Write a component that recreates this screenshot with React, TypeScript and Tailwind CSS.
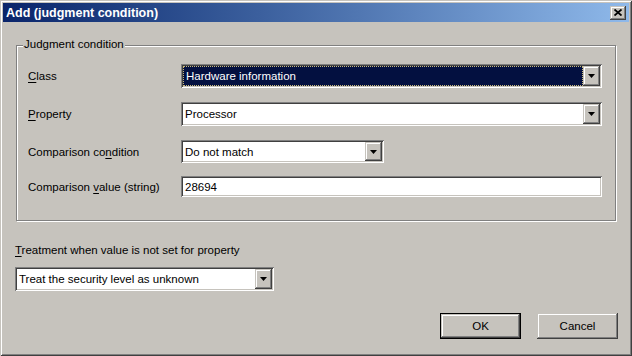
import React from 'react';

const sunken =
  'shadow-[inset_1px_1px_0_#808080,inset_-1px_-1px_0_#ffffff,inset_2px_2px_0_#404040,inset_-2px_-2px_0_#c6c3bd]';
const raised =
  'shadow-[inset_-1px_-1px_0_#404040,inset_1px_1px_0_#c6c3bd,inset_-2px_-2px_0_#808080,inset_2px_2px_0_#ffffff]';

const Arrow = () => (
  <svg width="7" height="4" viewBox="0 0 7 4">
    <path d="M0 0h7L3.5 4z" fill="#000" />
  </svg>
);

const DropButton = () => (
  <div className={`flex w-[17px] items-center justify-center bg-[#c6c3bd] ${raised}`}>
    <Arrow />
  </div>
);

interface ComboProps {
  value: string;
  width: string;
  height?: string;
  selected?: boolean;
}

const Combo = ({ value, width, height = 'h-[24px]', selected }: ComboProps) => (
  <div className={`flex ${width} ${height} bg-white p-[2px] ${sunken}`}>
    {selected ? (
      <div className="flex flex-1 items-center border border-dotted border-[#c9b97a] bg-[#031040] pl-[2px] text-white">
        {value}
      </div>
    ) : (
      <div className="flex flex-1 items-center pl-[2px]">{value}</div>
    )}
    <DropButton />
  </div>
);

const Key = ({ children }: { children: React.ReactNode }) => (
  <span className="underline underline-offset-[2px]">{children}</span>
);

const Row = ({ label, children, className }: { label: React.ReactNode; children: React.ReactNode; className: string }) => (
  <div className={`flex items-center ${className}`}>
    <div className="w-[153px]">{label}</div>
    {children}
  </div>
);

export default function App() {
  return (
    <div className="flex h-[356px] w-[632px] flex-col bg-[#c6c3bd] p-[3px] font-['Liberation_Sans',Arial,sans-serif] text-[11.5px] leading-[14px] text-black shadow-[inset_1px_1px_0_#c6c3bd,inset_-1px_-1px_0_#404040,inset_2px_2px_0_#ffffff,inset_-2px_-2px_0_#808080]">
      {/* title bar */}
      <div className="flex h-[19px] items-center bg-gradient-to-r from-[#0a246a] to-[#8fb9ea] pl-[3px] pr-[3px]">
        <span className="flex-1 text-[12.5px] font-bold text-white">Add (judgment condition)</span>
        <div className={`flex h-[14px] w-[16px] items-center justify-center bg-[#c6c3bd] ${raised}`}>
          <svg width="8" height="7" viewBox="0 0 8 7">
            <path d="M0.5 0.5L7.5 6.5M7.5 0.5L0.5 6.5" stroke="#000" strokeWidth="1.8" />
          </svg>
        </div>
      </div>

      <div className="flex flex-col">
        <div className="relative ml-[13px] mt-[23px] flex h-[176px] w-[600px] flex-col border border-[#808080] pl-[11px] shadow-[inset_1px_1px_0_#ffffff,1px_1px_0_#ffffff]">
          <span className="absolute left-[6px] top-[-9px] bg-[#c6c3bd] px-[1px]">Judgment condition</span>

          <Row className="mt-[18px]" label={<><Key>C</Key>lass</>}>
            <Combo value="Hardware information" width="w-[421px]" selected />
          </Row>
          <Row className="mt-[14px]" label={<><Key>P</Key>roperty</>}>
            <Combo value="Processor" width="w-[421px]" />
          </Row>
          <Row className="mt-[14px]" label={<>Comparison co<Key>n</Key>dition</>}>
            <Combo value="Do not match" width="w-[203px]" height="h-[23px]" />
          </Row>
          <Row className="mt-[13px]" label={<>Comparison <Key>v</Key>alue (string)</>}>
            <div className={`flex h-[21px] w-[421px] items-center bg-white p-[2px] pl-[4px] ${sunken}`}>28694</div>
          </Row>
        </div>

        <div className="ml-[12px] mt-[22px]">
          <Key>T</Key>reatment when value is not set for property
        </div>
        <div className="ml-[12px] mt-[10px]">
          <Combo value="Treat the security level as unknown" width="w-[259px]" />
        </div>

        <div className="mt-[22px] flex justify-end gap-[16px] pr-[11px]">
          <div className="h-[26px] w-[81px] border border-black">
            <div className={`flex h-full items-center justify-center bg-[#c6c3bd] ${raised}`}>OK</div>
          </div>
          <div className={`flex h-[26px] w-[81px] items-center justify-center bg-[#c6c3bd] ${raised}`}>Cancel</div>
        </div>
      </div>
    </div>
  );
}
